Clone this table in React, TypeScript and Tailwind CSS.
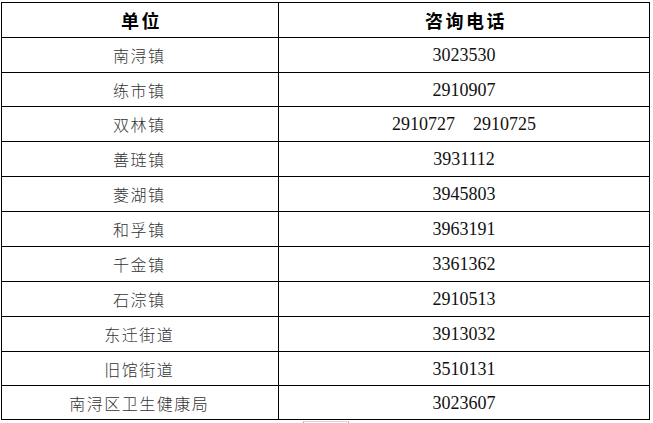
import React from "react";

const rows: { name: string; phones: string[]; h: string }[] = [
  { name: "南浔镇", phones: ["3023530"], h: "h-[35px]" },
  { name: "练市镇", phones: ["2910907"], h: "h-[34px]" },
  { name: "双林镇", phones: ["2910727", "2910725"], h: "h-[35px]" },
  { name: "善琏镇", phones: ["3931112"], h: "h-[35px]" },
  { name: "菱湖镇", phones: ["3945803"], h: "h-[35px]" },
  { name: "和孚镇", phones: ["3963191"], h: "h-[35px]" },
  { name: "千金镇", phones: ["3361362"], h: "h-[35px]" },
  { name: "石淙镇", phones: ["2910513"], h: "h-[35px]" },
  { name: "东迁街道", phones: ["3913032"], h: "h-[35px]" },
  { name: "旧馆街道", phones: ["3510131"], h: "h-[34px]" },
  { name: "南浔区卫生健康局", phones: ["3023607"], h: "h-[33px]" },
];

export default function App() {
  return (
    <div className="w-[653px] h-[423px] bg-white overflow-hidden">
      <div className="ml-[1px] mt-[2px] w-[649px] border border-black flex flex-col">
        <div className="flex h-[35px] border-b border-black">
          <div className="w-[277px] border-r border-black flex items-center justify-center">
            <span className="pl-[3px] text-[18px] font-bold tracking-[2.5px] text-black font-['Noto_Sans_CJK_SC',sans-serif] leading-none">
              单位
            </span>
          </div>
          <div className="flex-1 flex items-center justify-center">
            <span className="pl-[4px] text-[18px] font-bold tracking-[2.5px] text-black font-['Noto_Sans_CJK_SC',sans-serif] leading-none">
              咨询电话
            </span>
          </div>
        </div>
        {rows.map((r, i) => (
          <div
            key={i}
            className={`flex ${r.h} ${i < rows.length - 1 ? "border-b border-black" : ""}`}
          >
            <div className="w-[277px] border-r border-black flex items-center justify-center">
              <span className="pl-[1.5px] -ml-[3px] text-[16px] font-light tracking-[1.5px] text-[#333] font-['Noto_Sans_CJK_SC',sans-serif] leading-none">
                {r.name}
              </span>
            </div>
            <div className="flex-1 flex items-center justify-center gap-[18px]">
              {r.phones.map((p) => (
                <span
                  key={p}
                  className="text-[18px] text-[#111] font-['Liberation_Serif',serif] leading-none"
                >
                  {p}
                </span>
              ))}
            </div>
          </div>
        ))}
      </div>
      <div className="ml-[303px] mt-[1px] w-[46px] h-[3px] border-t border-t-[#d8d8d8] border-x border-x-[#aaa]" />
    </div>
  );
}
